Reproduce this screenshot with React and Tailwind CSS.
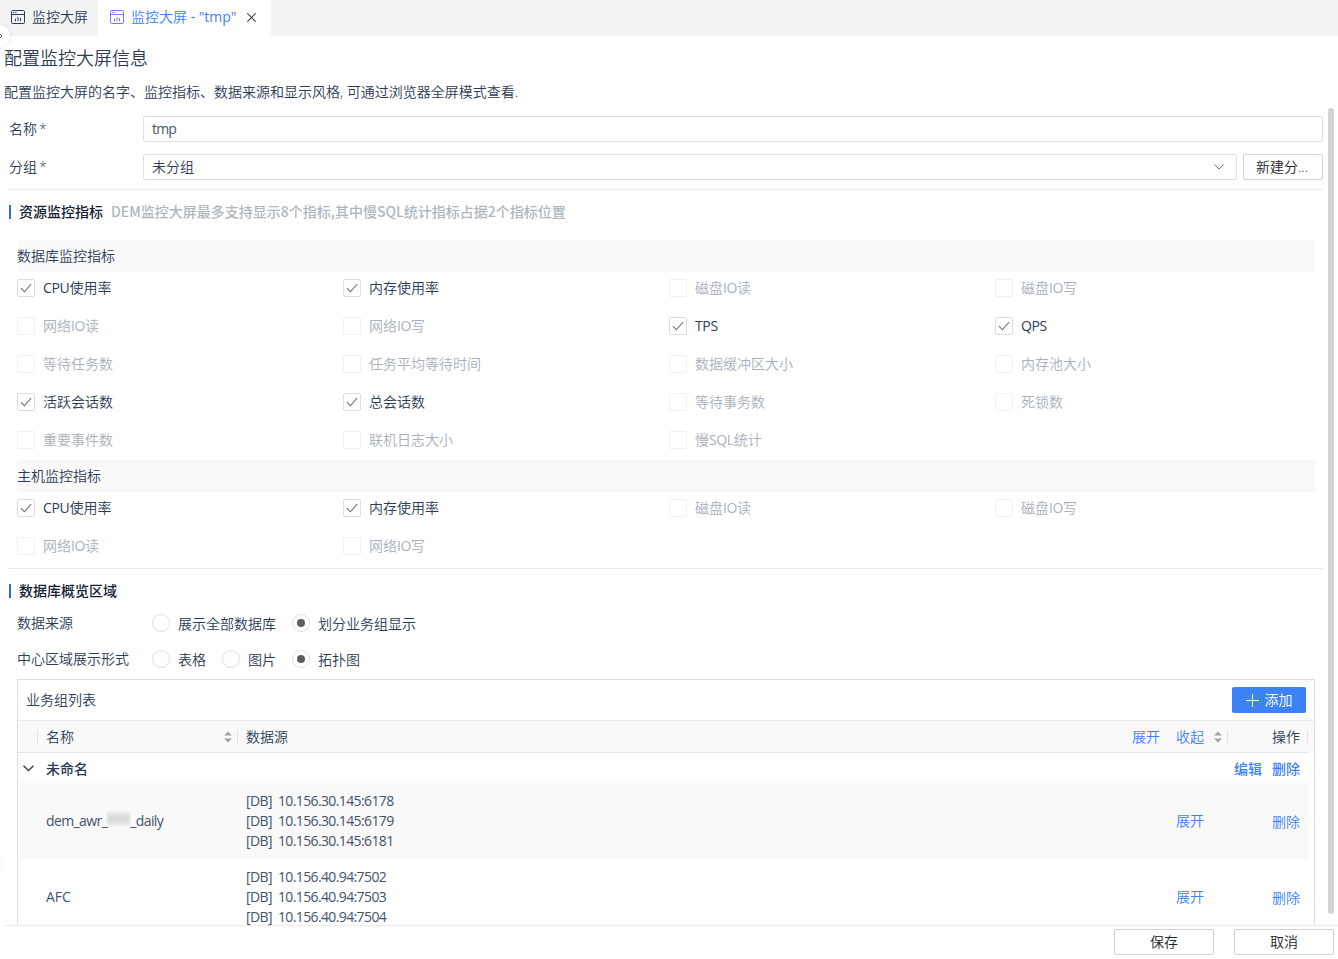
import React from "react";

function DashboardIcon({ className }) {
  return (
    <svg className={className} width="14" height="14" viewBox="0 0 14 14" fill="none" stroke="currentColor">
      <rect x="0.5" y="0.5" width="13" height="13" rx="1.2" strokeWidth="1" />
      <path d="M0.5 4.5H13.5" strokeWidth="1" />
      <path d="M2 2.5H3.2M4.2 2.5H5.4" strokeWidth="1" />
      <path d="M4.5 8.7V11.2M7 7V11.2M9.5 8V11.2" strokeWidth="1" />
    </svg>
  );
}

function Check() {
  return (
    <svg width="12" height="12" viewBox="0 0 12 12" fill="none" stroke="#7d6462" strokeWidth="1.1">
      <path d="M1 6.2L4.4 9.8L11.2 2" />
    </svg>
  );
}

function CheckItem({ label, checked }) {
  return (
    <div className="flex h-[38px] items-center gap-2">
      <span
        className={
          checked
            ? "flex h-[18px] w-[18px] items-center justify-center rounded-[2px] border border-[#dcdde0]"
            : "flex h-[18px] w-[18px] items-center justify-center rounded-[2px] border border-[#f0f1f2]"
        }
      >
        {checked && <Check />}
      </span>
      <span className={checked ? "text-[#2d3b55]" : "text-[#a9b0bb]"}>
        {label.split(/([A-Z]+)/).map((part, i) =>
          i % 2 ? (
            <span key={i} className="font-normal tracking-[-0.35px]">{part}</span>
          ) : (
            part
          )
        )}
      </span>
    </div>
  );
}

function Radio({ label, checked }) {
  return (
    <div className="flex items-center gap-2">
      <span className="flex h-[18px] w-[18px] items-center justify-center rounded-full border border-[#dfe0e2]">
        {checked && <span className="h-2 w-2 rounded-full bg-[#5e5e5e]" />}
      </span>
      <span className="relative top-px">{label}</span>
    </div>
  );
}

function Sorter() {
  return (
    <svg width="8" height="12" viewBox="0 0 8 12" fill="#a0a3a8">
      <path d="M4 0.5L8 4.4H0Z" />
      <path d="M4 11.5L8 7.6H0Z" />
    </svg>
  );
}

function SectionTitle({ title, hint }) {
  return (
    <div className="flex h-5 items-center font-['Noto_Sans_CJK_SC',sans-serif] font-medium">
      <span className="h-[14px] w-[2px] bg-[#3563f0]" />
      <span className="mb-[2px] ml-2 text-[#14202f]">{title}</span>
      {hint && <span className="mb-[2px] ml-2 text-[#b0b6bd]">{hint}</span>}
    </div>
  );
}

const dbMetrics = [
  ["CPU使用率", true], ["内存使用率", true], ["磁盘IO读", false], ["磁盘IO写", false],
  ["网络IO读", false], ["网络IO写", false], ["TPS", true], ["QPS", true],
  ["等待任务数", false], ["任务平均等待时间", false], ["数据缓冲区大小", false], ["内存池大小", false],
  ["活跃会话数", true], ["总会话数", true], ["等待事务数", false], ["死锁数", false],
  ["重要事件数", false], ["联机日志大小", false], ["慢SQL统计", false],
];
const hostMetrics = [
  ["CPU使用率", true], ["内存使用率", true], ["磁盘IO读", false], ["磁盘IO写", false],
  ["网络IO读", false], ["网络IO写", false],
];

function Metrics({ title, items, className }) {
  return (
    <div className={className}>
      <div className="flex h-8 w-[1298px] items-center rounded bg-[#f9f9f9]">{title}</div>
      <div className="-mt-[3px] grid grid-cols-[repeat(4,326px)]">
        {items.map(([label, checked]) => (
          <CheckItem key={label} label={label} checked={checked} />
        ))}
      </div>
    </div>
  );
}

function SourceRow({ name, sources, className }) {
  return (
    <div className={className}>
      <div className="w-[200px] pl-7 font-normal text-[#45526a]">{name}</div>
      <div className="flex-1 pl-7 leading-5 font-normal tracking-[-0.62px] text-[#45526a]">
        {sources.map((s) => (
          <div key={s}>[DB]&nbsp; {s}</div>
        ))}
      </div>
      <div className="flex w-[132px] justify-between text-[#3b82f6]">
        <span>展开</span>
        <span className="relative top-px pr-2">删除</span>
      </div>
    </div>
  );
}

export default function App() {
  return (
    <div className="relative flex h-[959px] w-[1338px] flex-col overflow-hidden bg-white font-['Open_Sans','Noto_Sans_CJK_SC',sans-serif] text-[14px] leading-5 font-[350] text-[#2d3b55]">
      <div className="flex h-9 shrink-0 bg-[#f3f3f3]">
        <div className="flex w-[98px] items-center pb-[2px] pl-[11px]">
          <DashboardIcon className="shrink-0" />
          <span className="ml-[7px] whitespace-nowrap">监控大屏</span>
        </div>
        <div className="flex w-[173px] items-center bg-white pb-[2px] pl-3 text-[#3b82f6]">
          <DashboardIcon className="shrink-0 text-[#7377f0]" />
          <span className="ml-[7px] w-[107px] whitespace-nowrap">
            监控大屏<span className="font-normal"> - "tmp"</span>
          </span>
          <svg className="ml-[9px]" width="9" height="9" viewBox="0 0 9 9" stroke="#444" strokeWidth="1.1">
            <path d="M0.3 0.3L8.7 8.7M8.7 0.3L0.3 8.7" />
          </svg>
        </div>
      </div>
      <div className="absolute top-[25px] -left-[12px] flex h-[22px] w-[22px] items-center justify-end rounded-full bg-white pr-[7px] shadow-[0_0_4px_rgba(0,0,0,0.1)]">
        <svg width="4" height="6" viewBox="0 0 4 6" fill="none" stroke="#555">
          <path d="M0.5 0.5L3 3L0.5 5.5" />
        </svg>
      </div>
      <div className="absolute top-[850px] -left-[32px] h-[30px] w-[30px] rounded-full shadow-[0_0_10px_rgba(0,0,0,0.1)]" />

      <h1 className="mt-[10px] h-6 shrink-0 pl-1 text-[18px] leading-6">配置监控大屏信息</h1>
      <p className="mt-3 h-5 shrink-0 pl-1">配置监控大屏的名字、监控指标、数据来源和显示风格, 可通过浏览器全屏模式查看.</p>

      <div className="flex h-[823px] shrink-0 overflow-hidden">
        <div className="w-[1328px] shrink-0 pt-[14px] pl-[9px]">
          <div className="flex h-[26px] w-[1314px] items-center">
            <div className="w-[134px]">名称<span className="ml-[2px]">*</span></div>
            <div className="flex h-[26px] flex-1 items-center rounded-[2px] border border-[#dcdee2] pl-2 font-normal tracking-[-0.8px] text-[#45526a]">tmp</div>
          </div>
          <div className="mt-3 flex h-[26px] w-[1314px] items-center">
            <div className="w-[134px]">分组<span className="ml-[2px]">*</span></div>
            <div className="flex h-[26px] flex-1 items-center justify-between rounded-[2px] border border-[#dcdee2] pr-3 pl-2">
              <span>未分组</span>
              <svg width="10" height="6" viewBox="0 0 10 6" fill="none" stroke="#5e7795">
                <path d="M0.4 0.5L5 5L9.6 0.5" />
              </svg>
            </div>
            <button className="ml-[6px] h-[26px] w-20 rounded-[2px] border border-[#cfd2d8] pr-[2px] leading-6 text-[#1f2329]">新建分...</button>
          </div>
          <div className="mt-[9px] h-px w-[1314px] bg-[#ebebec]" />
          <div className="mt-3">
            <SectionTitle title="资源监控指标" hint="DEM监控大屏最多支持显示8个指标,其中慢SQL统计指标占据2个指标位置" />
          </div>
          <Metrics title="数据库监控指标" items={dbMetrics} className="mt-[18px] ml-2" />
          <Metrics title="主机监控指标" items={hostMetrics} className="mt-px ml-2" />
          <div className="mt-[3px] h-px w-[1314px] bg-[#ebebec]" />
          <div className="mt-3">
            <SectionTitle title="数据库概览区域" />
          </div>
          <div className="mt-1 flex h-9 items-center pl-2">
            <span className="w-[135px]">数据来源</span>
            <div className="flex gap-4">
              <Radio label="展示全部数据库" />
              <Radio label="划分业务组显示" checked />
            </div>
          </div>
          <div className="flex h-9 items-center pl-2">
            <span className="w-[135px]">中心区域展示形式</span>
            <div className="flex gap-4">
              <Radio label="表格" />
              <Radio label="图片" />
              <Radio label="拓扑图" checked />
            </div>
          </div>

          <div className="mt-[2px] ml-2 w-[1298px] border border-[#dcdee2]">
            <div className="flex h-10 items-center justify-between pr-2 pl-2">
              <span>业务组列表</span>
              <button className="flex h-[26px] w-[74px] items-center justify-center gap-[6px] rounded-[2px] bg-[#3b82f6] text-white">
                <svg width="13" height="13" viewBox="0 0 13 13" stroke="currentColor">
                  <path d="M6.5 0V13M0 6.5H13" />
                </svg>
                添加
              </button>
            </div>
            <div className="border-t border-[#ebebec] bg-[#f9f9f9]">
              <div className="flex h-8 w-[1290px] items-center border-b border-[#e6e6e7]">
                <div className="h-[14px] w-5 border-r border-[#e2e4e7]" />
                <div className="flex w-[200px] items-center justify-between pl-2">
                  <span>名称</span>
                  <div className="flex items-center gap-[5px]">
                    <Sorter />
                    <span className="h-[14px] w-px bg-[#e2e4e7]" />
                  </div>
                </div>
                <div className="flex-1 pl-2">数据源</div>
                <div className="flex items-center text-[#3b82f6]">
                  <span>展开</span>
                  <span className="ml-4">收起</span>
                  <span className="ml-[10px]"><Sorter /></span>
                  <span className="ml-[5px] h-[14px] w-px bg-[#e2e4e7]" />
                </div>
                <div className="flex w-20 items-center justify-end gap-[7px]">
                  <span>操作</span>
                  <span className="h-[14px] w-px bg-[#e2e4e7]" />
                </div>
              </div>
            </div>
            <div className="flex h-[30px] w-[1290px] items-center pt-[2px] pr-2 pl-[5px] font-medium">
              <svg className="relative -top-px" width="11" height="7" viewBox="0 0 11 7" fill="none" stroke="#35435c" strokeWidth="1.4">
                <path d="M0.5 0.7L5.5 5.6L10.5 0.7" />
              </svg>
              <span className="ml-3 flex-1">未命名</span>
              <span className="text-[#3b82f6]">编辑</span>
              <span className="ml-[10px] text-[#3b82f6]">删除</span>
            </div>
            <SourceRow
              className="flex h-[76px] w-[1290px] items-center bg-[#f9f9f9]"
              name={
                <span className="flex items-center whitespace-nowrap tracking-[-0.6px]">
                  dem_awr_
                  <span className="relative -top-[2px] h-[14px] w-[23px] bg-[linear-gradient(#e9e9ea,#d6d7d9_50%,#ededee)] blur-[1px]" />
                  _daily
                </span>
              }
              sources={["10.156.30.145:6178", "10.156.30.145:6179", "10.156.30.145:6181"]}
            />
            <SourceRow
              className="flex h-[76px] w-[1290px] items-center bg-white"
              name="AFC"
              sources={["10.156.40.94:7502", "10.156.40.94:7503", "10.156.40.94:7504"]}
            />
          </div>
        </div>
        <div className="mt-[6px] h-[806px] w-[6px] rounded-full bg-[#d3d3d8]" />
      </div>

      <div className="ml-1 flex shrink-0 justify-end gap-5 border-t border-[#ebebec] pt-[3px] pr-1">
        <button className="h-[26px] w-[100px] rounded-[2px] border border-[#cfd2d8] leading-6 text-[#1f2329]">保存</button>
        <button className="h-[26px] w-[100px] rounded-[2px] border border-[#cfd2d8] leading-6 text-[#1f2329]">取消</button>
      </div>
    </div>
  );
}
